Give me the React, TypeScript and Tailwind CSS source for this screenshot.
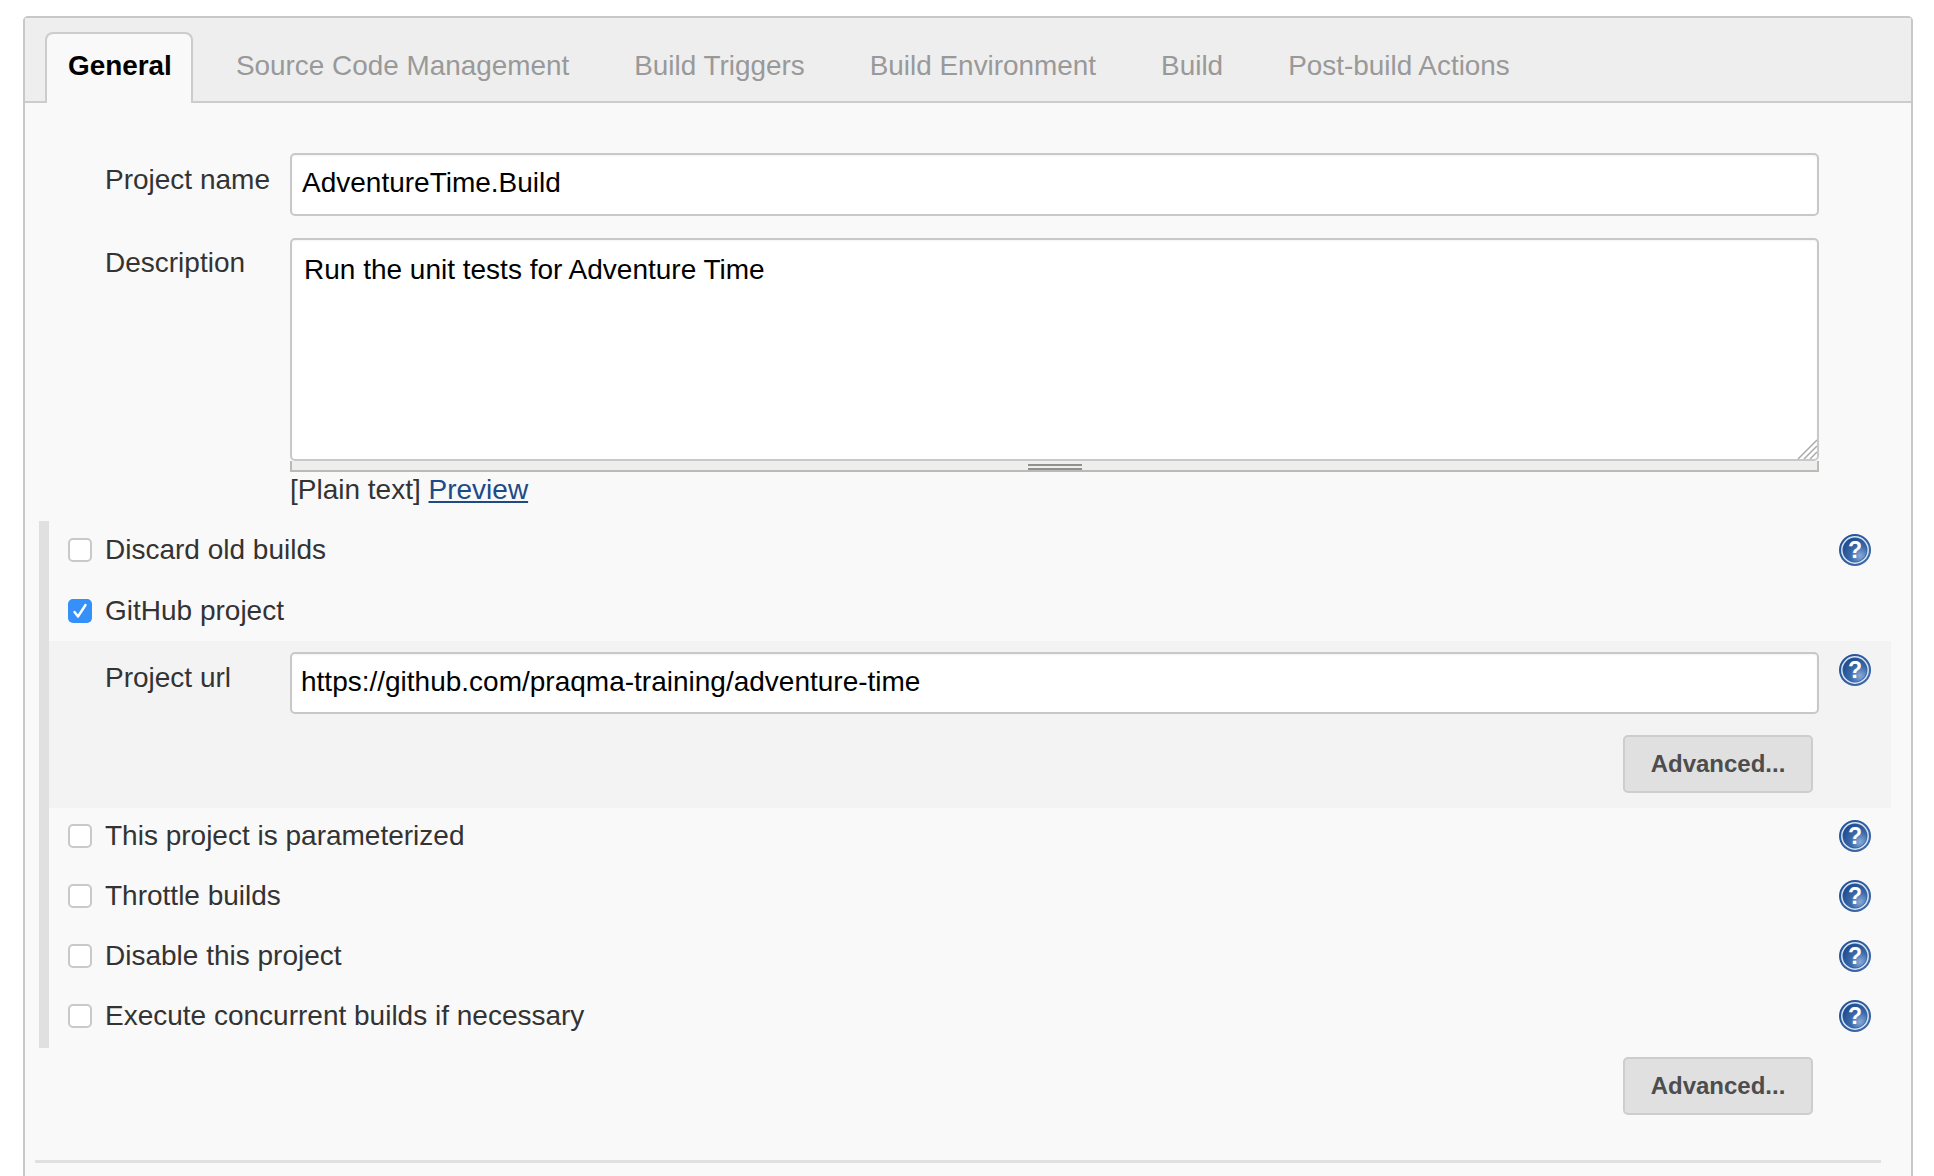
const tabs = ["Source Code Management", "Build Triggers", "Build Environment", "Build", "Post-build Actions"];

function HelpIcon() {
  return (
    <svg width="32" height="32" viewBox="0 0 32 32" className="shrink-0">
      <defs>
        <linearGradient id="helpRing" x1="0" y1="0" x2="1" y2="1">
          <stop offset="0%" stopColor="#1f4f94" />
          <stop offset="100%" stopColor="#3f6cad" />
        </linearGradient>
        <radialGradient id="helpFill" cx="72%" cy="75%" r="85%">
          <stop offset="0%" stopColor="#86abd8" />
          <stop offset="50%" stopColor="#3a69a9" />
          <stop offset="100%" stopColor="#1d4a8c" />
        </radialGradient>
      </defs>
      <circle cx="16" cy="16" r="16" fill="url(#helpRing)" />
      <circle cx="16" cy="16" r="13.2" fill="none" stroke="#d8e3f1" strokeWidth="1.5" />
      <circle cx="16" cy="16" r="11.6" fill="url(#helpFill)" />
      <text x="16" y="24" textAnchor="middle" fontSize="23" fontWeight="700" fill="#fff" fontFamily="Liberation Sans, sans-serif">?</text>
    </svg>
  );
}

function Checkbox({ checked }: { checked?: boolean }) {
  if (checked) {
    return (
      <span className="h-6 w-6 shrink-0 rounded-[5px] bg-[#3590fa]">
        <svg width="24" height="24" viewBox="0 0 24 24" fill="none">
          <path d="M6.5 13 L10 17.5 L17.5 6" stroke="#fff" strokeWidth="2.4" strokeLinecap="round" strokeLinejoin="round" />
        </svg>
      </span>
    );
  }
  return <span className="h-6 w-6 shrink-0 rounded-[5px] border-2 border-[#c9c9c9] bg-white" />;
}

function OptionRow({ label, checked, help = true, className }: { label: string; checked?: boolean; help?: boolean; className: string }) {
  return (
    <div className={`flex items-start pl-[19px] pr-5 ${className}`}>
      <Checkbox checked={checked} />
      <span className="ml-[13px] -mt-1 flex-1 leading-8">{label}</span>
      {help && (
        <span className="-mt-1">
          <HelpIcon />
        </span>
      )}
    </div>
  );
}

function AdvancedButton() {
  return (
    <button className="h-[58px] w-[190px] rounded-[5px] border-2 border-[#cdcdcd] bg-[#e0e0e0] text-[24px] font-bold text-[#4d4d4d]">
      Advanced...
    </button>
  );
}

export default function App() {
  return (
    <div className="h-[1176px] overflow-hidden bg-white pl-[23px] pr-[21px] pt-4 font-['Liberation_Sans',sans-serif] text-[28px] text-[#333]">
      <div className="h-[1200px] rounded-t-[5px] border-2 border-[#c8c8c8] bg-[#f9f9f9]">
        {/* TABS */}
        <div className="flex h-[85px] items-end gap-[21px] border-b-2 border-[#cccccc] bg-[#eeeeee] pl-5 text-[27.9px]">
          <div className="-mb-[2px] h-[71px] rounded-t-[8px] border-2 border-b-0 border-[#cccccc] bg-[#f9f9f9] pl-[21px] pr-[19px] pt-4 font-bold leading-8 text-black">
            General
          </div>
          {tabs.map((t) => (
            <div key={t} className="-mb-[2px] h-[71px] border-2 border-transparent px-5 pt-4 leading-8 text-[#999]">
              {t}
            </div>
          ))}
        </div>

        {/* NAME AND DESCRIPTION */}
        <div className="pl-20 pt-[50px]">
          <div className="flex items-start">
            <label className="w-[185px] pt-[11px] leading-8">Project name</label>
            <input
              readOnly
              value="AdventureTime.Build"
              className="h-[63px] w-[1529px] rounded-[5px] border-2 border-[#c8c8c8] bg-white px-[10px] pb-[3px] text-black shadow-[inset_0_1px_2px_rgba(0,0,0,0.05)]"
            />
          </div>
          <div className="mt-[22px] flex items-start">
            <label className="w-[185px] pt-[9px] leading-8">Description</label>
            <div className="w-[1529px]">
              <div className="relative">
                <textarea
                  readOnly
                  value="Run the unit tests for Adventure Time"
                  className="block h-[223px] w-full resize-none rounded-[5px] border-2 border-[#c8c8c8] bg-white px-3 pt-[14px] leading-8 text-black shadow-[inset_0_1px_2px_rgba(0,0,0,0.05)]"
                />
                <svg width="20" height="20" viewBox="0 0 20 20" className="absolute bottom-[2px] right-[2px]">
                  <path d="M1 20 L20 1 M7 20 L20 7 M13 20 L20 13" stroke="#aaa" strokeWidth="1.5" />
                </svg>
              </div>
              <div className="flex h-[11px] items-start justify-center border-x-2 border-b-2 border-[#bbbbb5] bg-[#eeeeee] pt-[3px]">
                <div className="h-[6px] w-[54px] border-y-2 border-[#8f928c]" />
              </div>
              <div className="mt-[2px] leading-8">
                [Plain text] <a className="text-[#204a87] underline">Preview</a>
              </div>
            </div>
          </div>
        </div>

        {/* OPTIONS */}
        <div className="ml-[14px] mr-5 mt-[15px] border-l-[10px] border-[#e0e0e0]">
          <OptionRow label="Discard old builds" className="h-[60px] pt-[17px]" />
          <OptionRow label="GitHub project" checked help={false} className="h-[60px] pt-[18px]" />

          <div className="bg-[#f3f3f3] pb-[15px] pl-14 pr-5 pt-[11px]">
            <div className="flex items-start">
              <label className="w-[185px] pt-[10px] leading-8">Project url</label>
              <input
                readOnly
                value="https://github.com/praqma-training/adventure-time"
                className="h-[62px] w-[1529px] rounded-[5px] border-2 border-[#c8c8c8] bg-white px-[9px] pb-[3px] text-black shadow-[inset_0_1px_2px_rgba(0,0,0,0.05)]"
              />
              <span className="ml-5 mt-[2px]">
                <HelpIcon />
              </span>
            </div>
            <div className="mr-[58px] mt-[21px] flex justify-end">
              <AdvancedButton />
            </div>
          </div>

          <OptionRow label="This project is parameterized" className="h-[60px] pt-4" />
          <OptionRow label="Throttle builds" className="h-[60px] pt-4" />
          <OptionRow label="Disable this project" className="h-[60px] pt-4" />
          <OptionRow label="Execute concurrent builds if necessary" className="h-[60px] pt-4" />
        </div>

        <div className="mr-[98px] mt-[9px] flex justify-end">
          <AdvancedButton />
        </div>
        <div className="ml-[10px] mr-[30px] mt-[45px] h-[3px] bg-[#e0e0e0]" />
      </div>
    </div>
  );
}
